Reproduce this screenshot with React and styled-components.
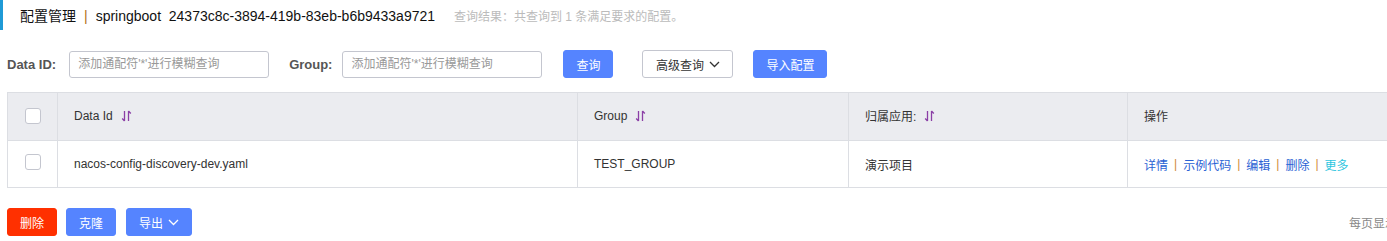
import React from "react";
import styled, { createGlobalStyle } from "styled-components";

const GlobalStyle = createGlobalStyle`
  html, body {
    margin: 0;
    padding: 0;
    background: #fff;
    overflow: hidden;
  }
  body {
    font-family: "Liberation Sans", "Noto Sans CJK SC", sans-serif;
    color: #333;
  }
`;

const Page = styled.div`
  width: 1440px;
`;

const TitleBar = styled.div`
  display: flex;
  align-items: center;
  height: 30px;
  border-left: 3px solid #1f9ad6;
  padding-left: 17px;
  gap: 19px;
`;

const Title = styled.span`
  font-size: 14px;
  color: #111;
  white-space: nowrap;
`;

const Sep = styled.span`
  color: #b0701a;
  margin: 0 8px;
`;

const Hint = styled.span`
  font-size: 12px;
  color: #bbb;
  white-space: nowrap;
`;

const SearchRow = styled.div`
  display: flex;
  align-items: center;
  height: 28px;
  margin-top: 20px;
  padding-left: 7px;
`;

const Label = styled.label`
  font-size: 13px;
  font-weight: bold;
  color: #555;
  margin-right: ${(p) => p.$mr}px;
`;

const Input = styled.input`
  box-sizing: border-box;
  width: 200px;
  height: 27px;
  border: 1px solid #c4c6cf;
  border-radius: 3px;
  padding: 0 8px;
  font-family: inherit;
  font-size: 12px;
  margin-right: ${(p) => p.$mr || 0}px;
  &::placeholder {
    color: #999;
  }
`;

const Button = styled.button`
  box-sizing: border-box;
  height: 28px;
  width: ${(p) => p.$w}px;
  margin-right: ${(p) => p.$mr || 0}px;
  border-radius: 3px;
  font-family: inherit;
  font-size: 12px;
  display: inline-flex;
  align-items: center;
  justify-content: center;
  gap: 5px;
  padding: 0;
  cursor: pointer;
  border: 1px solid
    ${(p) => (p.$kind === "normal" ? "#c4c6cf" : p.$kind === "danger" ? "#ff3000" : "#5584ff")};
  background: ${(p) => (p.$kind === "normal" ? "#fff" : p.$kind === "danger" ? "#ff3000" : "#5584ff")};
  color: ${(p) => (p.$kind === "normal" ? "#333" : "#fff")};
`;

const Table = styled.div`
  margin: 14px 0 0 7px;
  border: 1px solid #dcdee3;
  border-right: none;
`;

const Row = styled.div`
  display: grid;
  grid-template-columns: 49px 520px 271px 279px 1fr;
  height: ${(p) => (p.$head ? 47 : 46)}px;
  background: ${(p) => (p.$head ? "#ebecf0" : "#fff")};
  border-top: ${(p) => (p.$head ? "none" : "1px solid #dcdee3")};
`;

const Cell = styled.div`
  display: flex;
  align-items: center;
  justify-content: ${(p) => (p.$center ? "center" : "flex-start")};
  padding-left: ${(p) => (p.$center ? 0 : 16)}px;
  border-left: ${(p) => (p.$first ? "none" : "1px solid #dcdee3")};
  font-size: 12px;
  color: #333;
  white-space: nowrap;
  padding-bottom: ${(p) => (p.$head ? 2 : 0)}px;
`;

const Check = styled.span`
  box-sizing: border-box;
  width: 16px;
  height: 16px;
  border: 1px solid #c4c6cf;
  border-radius: 3px;
  background: #fff;
  margin-bottom: ${(p) => p.$mb || 0}px;
`;

const Link = styled.a`
  color: ${(p) => (p.$more ? "#2fc6e0" : "#2a62d4")};
  text-decoration: none;
`;

const LinkSep = styled.span`
  color: #d08a3a;
  margin: 0 6px;
`;

const Footer = styled.div`
  display: flex;
  align-items: center;
  margin-top: 20px;
  padding-left: 7px;
`;

const Spacer = styled.div`
  flex: 1;
`;

const PageInfo = styled.span`
  font-size: 12px;
  color: #888;
  margin-right: 31px;
  white-space: nowrap;
`;

const SortIcon = () => (
  <svg width="11" height="12" viewBox="0 0 11 12" style={{ marginLeft: 8 }}>
    <path d="M3.5 1v10M1.2 8.5L3.5 11" stroke="#8b3fa6" strokeWidth="1.3" fill="none" />
    <path d="M7.5 11V1M7.5 1l2.3 2.5" stroke="#8b3fa6" strokeWidth="1.3" fill="none" />
  </svg>
);

const Chevron = ({ color }) => (
  <svg width="11" height="7" viewBox="0 0 11 7">
    <path d="M1 1l4.5 4.5L10 1" stroke={color} strokeWidth="1.3" fill="none" />
  </svg>
);

export default function App() {
  return (
    <Page>
      <GlobalStyle />
      <TitleBar>
        <Title>
          配置管理<Sep>|</Sep>springboot&nbsp;&nbsp;24373c8c-3894-419b-83eb-b6b9433a9721
        </Title>
        <Hint>查询结果：共查询到 1 条满足要求的配置。</Hint>
      </TitleBar>

      <SearchRow>
        <Label $mr={13}>Data ID:</Label>
        <Input placeholder="添加通配符'*'进行模糊查询" $mr={20} />
        <Label $mr={10}>Group:</Label>
        <Input placeholder="添加通配符'*'进行模糊查询" $mr={21} />
        <Button $w={50} $mr={29}>查询</Button>
        <Button $kind="normal" $w={91} $mr={20}>
          高级查询 <Chevron color="#333" />
        </Button>
        <Button $w={74}>导入配置</Button>
      </SearchRow>

      <Table>
        <Row $head>
          <Cell $first $center $head>
            <Check />
          </Cell>
          <Cell $head>
            Data Id <SortIcon />
          </Cell>
          <Cell $head>
            Group <SortIcon />
          </Cell>
          <Cell $head>
            归属应用: <SortIcon />
          </Cell>
          <Cell $head>操作</Cell>
        </Row>
        <Row>
          <Cell $first $center>
            <Check $mb={4} />
          </Cell>
          <Cell>nacos-config-discovery-dev.yaml</Cell>
          <Cell>TEST_GROUP</Cell>
          <Cell>演示项目</Cell>
          <Cell>
            <Link href="#">详情</Link>
            <LinkSep>|</LinkSep>
            <Link href="#">示例代码</Link>
            <LinkSep>|</LinkSep>
            <Link href="#">编辑</Link>
            <LinkSep>|</LinkSep>
            <Link href="#">删除</Link>
            <LinkSep>|</LinkSep>
            <Link href="#" $more>更多</Link>
          </Cell>
        </Row>
      </Table>

      <Footer>
        <Button $kind="danger" $w={50} $mr={9}>删除</Button>
        <Button $w={50} $mr={10}>克隆</Button>
        <Button $w={66}>
          导出 <Chevron color="#fff" />
        </Button>
        <Spacer />
        <PageInfo>每页显示：</PageInfo>
      </Footer>
    </Page>
  );
}
